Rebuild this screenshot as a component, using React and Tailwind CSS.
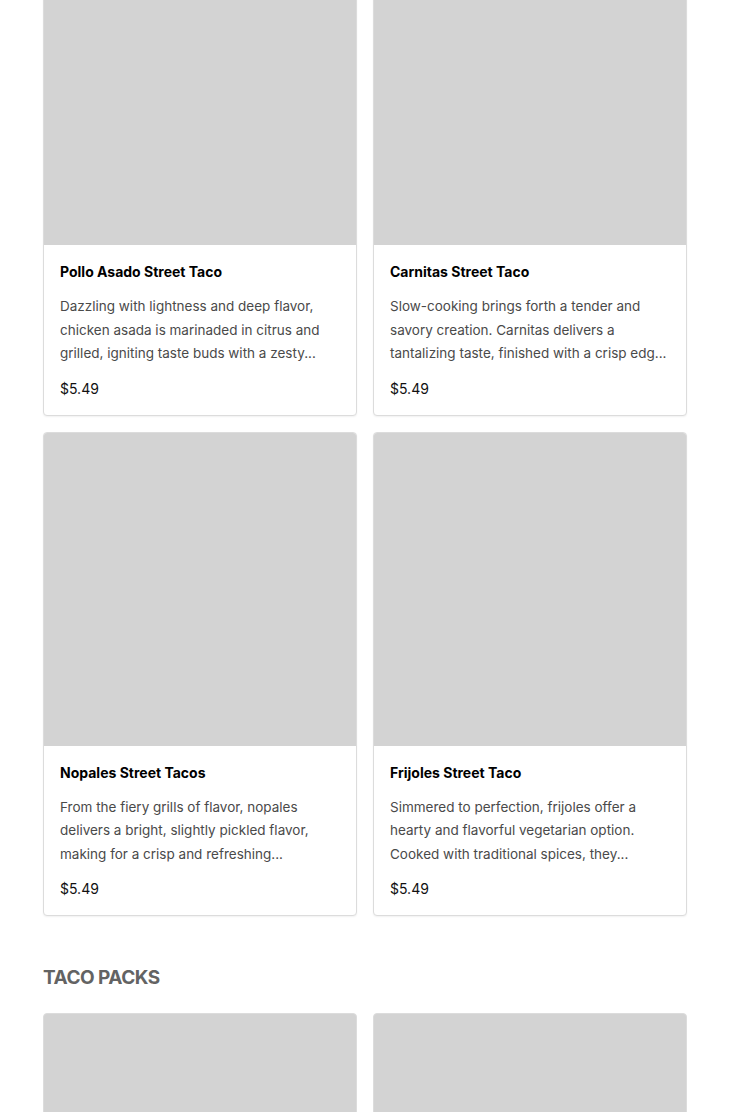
import React from 'react';

const tacos = [
  {
    name: 'Pollo Asado Street Taco',
    desc: 'Dazzling with lightness and deep flavor, chicken asada is marinaded in citrus and grilled, igniting taste buds with a zesty...',
    price: '$5.49',
  },
  {
    name: 'Carnitas Street Taco',
    desc: 'Slow-cooking brings forth a tender and savory creation. Carnitas delivers a tantalizing taste, finished with a crisp edg...',
    price: '$5.49',
  },
  {
    name: 'Nopales Street Tacos',
    desc: 'From the fiery grills of flavor, nopales delivers a bright, slightly pickled flavor, making for a crisp and refreshing...',
    price: '$5.49',
  },
  {
    name: 'Frijoles Street Taco',
    desc: 'Simmered to perfection, frijoles offer a hearty and flavorful vegetarian option. Cooked with traditional spices, they...',
    price: '$5.49',
  },
];

const MenuCard = ({ item }) => (
  <div className="bg-white border border-[#dcdcdc] rounded-[4px] overflow-hidden shadow-[0_1px_2px_rgba(0,0,0,0.06)]">
    <div className="h-[313px] bg-[#d3d3d3]"></div>
    <div className="px-4 pt-[17px] pb-4">
      <h3 className="text-[14px] leading-5 font-bold text-black">{item.name}</h3>
      <p className="mt-[13px] text-[13.5px] leading-[23.5px] text-[#4a4a4a]">{item.desc}</p>
      <div className="mt-[13px] text-[14px] leading-5 text-[#111]">{item.price}</div>
    </div>
  </div>
);

const App = () => {
  return (
    <div className="h-[1112px] overflow-hidden bg-white font-['Inter',sans-serif]">
      <div className="px-[43px] mt-[-69px]">
        <div className="grid grid-cols-2 gap-4">
          {tacos.map((t) => (
            <MenuCard key={t.name} item={t} />
          ))}
        </div>

        <h2 className="mt-12 text-[19px] leading-7 font-bold text-[#636363] tracking-[-0.5px]">TACO PACKS</h2>

        <div className="grid grid-cols-2 gap-4 mt-[21px]">
          <div className="h-[200px] bg-[#d3d3d3] border border-[#dcdcdc] rounded-[4px]"></div>
          <div className="h-[200px] bg-[#d3d3d3] border border-[#dcdcdc] rounded-[4px]"></div>
        </div>
      </div>
    </div>
  );
};

export default App;
